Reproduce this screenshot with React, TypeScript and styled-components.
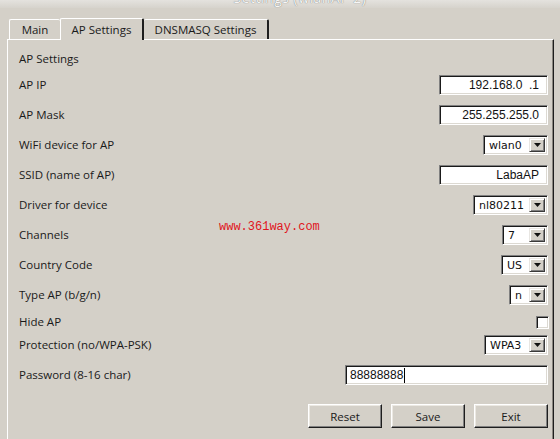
import React from "react";
import styled, { createGlobalStyle } from "styled-components";

const Global = createGlobalStyle`
  html, body { margin: 0; padding: 0; background: #d4d0c8; }
  body { font-family: "Open Sans", "Noto Sans", sans-serif; font-size: 11.5px; color: #1a1a1a; }
`;

const Window = styled.div`
  position: relative;
  width: 560px;
  height: 439px;
  overflow: hidden;
  display: flex;
  flex-direction: column;
  background: #d4d0c8;
`;

const TitleBar = styled.div`
  height: 8px;
  overflow: hidden;
  display: flex;
  justify-content: center;
  background: linear-gradient(#e4e2de, #d6d3cc);
`;

const TitleText = styled.span`
  margin-top: -10px;
  margin-left: 40px;
  font-size: 14px;
  line-height: 16px;
  color: #f6f6f6;
  text-shadow: 0 0 1px #555;
  letter-spacing: 0.5px;
`;

const TabStrip = styled.div`
  display: flex;
  align-items: flex-end;
  height: 22px;
  margin: 9px 0 0 9px;
  position: relative;
  z-index: 1;
`;

type TabProps = { $active?: boolean; $first?: boolean; $dark?: boolean; $w: number };

const Tab = styled.div<TabProps>`
  box-sizing: border-box;
  width: ${(p) => p.$w}px;
  height: ${(p) => (p.$active ? 22 : 20)}px;
  margin-bottom: ${(p) => (p.$active ? -1 : 0)}px;
  display: flex;
  align-items: center;
  justify-content: center;
  background: #d4d0c8;
  border-top: 1px solid #fff;
  border-left: ${(p) => (p.$first || p.$active ? "1px solid #fff" : "none")};
  border-right: ${(p) => (p.$dark ? "2px solid #1e1e1e" : "none")};
  border-top-left-radius: 2px;
  border-top-right-radius: 2px;
  font-size: 11.5px;
  line-height: 16px;
  padding-top: ${(p) => (p.$active ? 0 : 1)}px;
`;

const Panel = styled.div`
  flex: 1;
  margin: 0 6px 0 7px;
  border-top: 1px solid #fff;
  border-left: 1px solid #fff;
  border-right: 1px solid #1e1e1e;
  box-shadow: inset -1px 0 0 #8a877f;
  padding: 9px 5px 0 11px;
  display: flex;
  flex-direction: column;
`;

const Heading = styled.div`
  height: 20px;
  line-height: 20px;
  margin-bottom: 1px;
`;

const Row = styled.div<{ $h?: number; $mt?: number }>`
  height: ${(p) => p.$h ?? 30}px;
  margin-top: ${(p) => p.$mt ?? 0}px;
  display: flex;
  align-items: center;
  justify-content: space-between;
`;

const Label = styled.span`
  line-height: 16px;
`;

const sunken = `
  box-sizing: border-box;
  background: #fff;
  border-top: 1px solid #808080;
  border-left: 1px solid #808080;
  border-bottom: 1px solid #fff;
  border-right: 1px solid #fff;
  box-shadow: inset 1px 1px 0 #1a1a1a, inset -1px -1px 0 #dcd9d2;
`;

const TextInput = styled.div<{ $w: number; $align?: string }>`
  ${sunken}
  width: ${(p) => p.$w}px;
  height: 20px;
  display: flex;
  align-items: center;
  justify-content: ${(p) => (p.$align === "left" ? "flex-start" : "flex-end")};
  padding: 0 8px 0 4px;
  font-family: "Liberation Sans", Arial, sans-serif;
  font-size: 12px;
  color: #111;
`;

const Caret = styled.span`
  display: inline-block;
  width: 1px;
  height: 15px;
  background: #000;
  margin-left: 1px;
`;

const Combo = styled.div<{ $w: number }>`
  ${sunken}
  width: ${(p) => p.$w}px;
  height: 20px;
  display: flex;
  align-items: stretch;
  padding: 2px;
  font-family: "DejaVu Sans", Verdana, sans-serif;
  font-size: 11px;
  color: #111;
`;

const ComboText = styled.span`
  flex: 1;
  display: flex;
  align-items: center;
  padding-left: 3px;
`;

const ArrowBtn = styled.span`
  box-sizing: border-box;
  width: 16px;
  background: #d4d0c8;
  border-top: 1px solid #e8e6e2;
  border-left: 1px solid #e8e6e2;
  border-bottom: 1px solid #3a3a3a;
  border-right: 1px solid #3a3a3a;
  box-shadow: inset 1px 1px 0 #fff, inset -1px -1px 0 #808080;
  display: flex;
  align-items: center;
  justify-content: center;
`;

const Check = styled.span`
  ${sunken}
  width: 13px;
  height: 13px;
  margin-right: -1px;
`;

const ButtonRow = styled.div`
  display: flex;
  justify-content: flex-end;
  gap: 9px;
  margin-top: 14px;
`;

const Button = styled.button`
  box-sizing: border-box;
  width: 74px;
  height: 24px;
  background: #d4d0c8;
  border-top: 1px solid #fff;
  border-left: 1px solid #fff;
  border-bottom: 1px solid #1e1e1e;
  border-right: 1px solid #1e1e1e;
  box-shadow: inset -1px -1px 0 #808080, inset 1px 1px 0 #ece9e3;
  font-family: "Open Sans", "Noto Sans", sans-serif;
  font-size: 11.5px;
  color: #1a1a1a;
  padding: 0;
`;

const Watermark = styled.div`
  position: absolute;
  left: 219px;
  top: 220px;
  font-family: "Liberation Mono", monospace;
  font-size: 12px;
  color: #e0141c;
`;

const Arrow = () => (
  <svg width="7" height="4" viewBox="0 0 7 4">
    <path d="M0 0H7L3.5 4Z" fill="#111" />
  </svg>
);

const ComboBox = ({ w, value }: { w: number; value: string }) => (
  <Combo $w={w}>
    <ComboText>{value}</ComboText>
    <ArrowBtn>
      <Arrow />
    </ArrowBtn>
  </Combo>
);

export default function App() {
  return (
    <>
      <Global />
      <Window>
        <TitleBar>
          <TitleText>Settings (wlanAP 2)</TitleText>
        </TitleBar>
        <TabStrip>
          <Tab $w={51} $first>Main</Tab>
          <Tab $w={84} $active $dark>AP Settings</Tab>
          <Tab $w={125} $dark>DNSMASQ Settings</Tab>
        </TabStrip>
        <Panel>
          <Heading>AP Settings</Heading>
          <Row>
            <Label>AP IP</Label>
            <TextInput $w={109}>192.168.0&nbsp;&nbsp;.1</TextInput>
          </Row>
          <Row>
            <Label>AP Mask</Label>
            <TextInput $w={109}>255.255.255.0</TextInput>
          </Row>
          <Row>
            <Label>WiFi device for AP</Label>
            <ComboBox w={65} value="wlan0" />
          </Row>
          <Row>
            <Label>SSID (name of AP)</Label>
            <TextInput $w={109}>LabaAP</TextInput>
          </Row>
          <Row>
            <Label>Driver for device</Label>
            <ComboBox w={75} value="nl80211" />
          </Row>
          <Row>
            <Label>Channels</Label>
            <ComboBox w={46} value="7" />
          </Row>
          <Row>
            <Label>Country Code</Label>
            <ComboBox w={47} value="US" />
          </Row>
          <Row>
            <Label>Type AP (b/g/n)</Label>
            <ComboBox w={39} value="n" />
          </Row>
          <Row $h={24}>
            <Label>Hide AP</Label>
            <Check />
          </Row>
          <Row $h={22}>
            <Label>Protection (no/WPA-PSK)</Label>
            <ComboBox w={64} value="WPA3" />
          </Row>
          <Row $mt={4}>
            <Label>Password (8-16 char)</Label>
            <TextInput $w={203} $align="left">
              88888888
              <Caret />
            </TextInput>
          </Row>
          <ButtonRow>
            <Button>Reset</Button>
            <Button>Save</Button>
            <Button>Exit</Button>
          </ButtonRow>
        </Panel>
        <Watermark>www.361way.com</Watermark>
      </Window>
    </>
  );
}
